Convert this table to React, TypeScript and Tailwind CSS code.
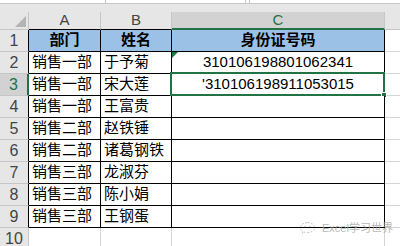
import React from "react";

const rows: [string, string, string][] = [
  ["部门", "姓名", "身份证号码"],
  ["销售一部", "于予菊", "310106198801062341"],
  ["销售一部", "宋大莲", "'310106198911053015"],
  ["销售一部", "王富贵", ""],
  ["销售二部", "赵铁锤", ""],
  ["销售二部", "诸葛钢铁", ""],
  ["销售三部", "龙淑芬", ""],
  ["销售三部", "陈小娟", ""],
  ["销售三部", "王钢蛋", ""],
  ["", "", ""],
];

const font = { fontFamily: '"Liberation Sans", "Noto Sans CJK SC", sans-serif' };

export default function App() {
  return (
    <div className="relative w-[400px] h-[246px] overflow-hidden bg-white text-black" style={font}>
      {/* formula bar strip */}
      <div className="flex h-[4px] border-b border-[#c6c6c6] bg-white">
        <div className="w-[106px] border-r border-[#c6c6c6]" />
        <div className="w-[140px] border-r border-[#c6c6c6]" />
        <div className="w-[4px] border-r border-[#c6c6c6]" />
        <div className="flex-1" />
      </div>
      <div className="h-[8px] bg-[#e6e6e6]" />
      <div className="grid grid-cols-[29px_72px_71px_213px_1fr] grid-rows-[18px_repeat(10,22px)]">
        {/* column headers */}
        <div className="relative bg-[#e6e6e6] border-r border-b border-[#c6c6c6]">
          <div className="absolute right-[2px] bottom-[2px] w-0 h-0 border-l-[11px] border-l-transparent border-b-[11px] border-b-[#b4b4b4]" />
        </div>
        <div className="flex items-center justify-center bg-[#e6e6e6] border-r border-[#c6c6c6] border-b border-b-black text-[15px] text-[#444]">A</div>
        <div className="flex items-center justify-center bg-[#e6e6e6] border-r border-[#c6c6c6] border-b border-b-black text-[15px] text-[#444]">B</div>
        <div className="flex items-center justify-center bg-[#d2d2d2] border-r border-[#c6c6c6] border-b-2 border-b-[#217346] text-[15px] text-[#217346]">C</div>
        <div className="bg-[#e6e6e6] border-b border-[#c6c6c6]" />

        {rows.map((r, i) => {
          const n = i + 1;
          const inTable = n <= 9;
          const isHeader = n === 1;
          const sel = n === 3;
          const bc = inTable ? "border-black" : "border-[#d4d4d4]";
          const fill = isHeader ? "bg-[#9bc2e6] font-bold" : "bg-white";
          return (
            <React.Fragment key={n}>
              <div
                className={`flex items-center justify-center text-[16px] border-b border-[#c6c6c6] ${
                  sel ? "bg-[#d2d2d2] text-[#217346] border-r-2 border-r-[#217346]" : "bg-[#e6e6e6] text-[#444] border-r"
                } ${inTable && !sel ? "border-r-black" : ""}`}
              >
                {n}
              </div>
              <div
                className={`flex items-center text-[15px] border-r border-b ${bc} ${fill} ${
                  isHeader ? "justify-center" : "pl-[3px]"
                }`}
              >
                {r[0]}
              </div>
              <div
                className={`flex items-center text-[15px] border-r border-b ${bc} ${fill} ${
                  isHeader ? "justify-center" : "pl-[3px]"
                }`}
              >
                {r[1]}
              </div>
              <div className={`relative flex items-center justify-center text-[15px] border-r border-b ${bc} ${fill}`}>
                {n === 2 && (
                  <div className="absolute left-0 top-0 w-0 h-0 border-t-[6px] border-t-[#1e7a44] border-r-[6px] border-r-transparent" />
                )}
                {r[2]}
                {sel && (
                  <>
                    <div className="absolute -left-[2px] -top-[2px] -right-[1px] -bottom-[1px] border-2 border-[#217346]" />
                    <div className="absolute -right-[3px] -bottom-[3px] w-[6px] h-[6px] bg-[#217346] border border-white" />
                  </>
                )}
              </div>
              <div className="bg-white border-b border-[#d4d4d4]" />
            </React.Fragment>
          );
        })}
      </div>
      {/* watermark */}
      <div className="absolute left-[299px] top-[221px] flex items-center gap-[6px] whitespace-nowrap opacity-80">
        <svg width="17" height="14" viewBox="0 0 17 14" fill="none" stroke="#b8b8b8" strokeWidth="1">
          <path d="M8.5 1.5 C4.5 1.5 1.5 3.8 1.5 6.6 C1.5 8.2 2.4 9.5 3.8 10.4 L3.3 12.3 L5.6 11.2 C6.5 11.5 7.5 11.7 8.5 11.7 C12.5 11.7 15.5 9.4 15.5 6.6 C15.5 3.8 12.5 1.5 8.5 1.5 Z" strokeDasharray="2 1.5" />
          <circle cx="6" cy="5.5" r="0.8" fill="#b8b8b8" stroke="none" />
          <circle cx="11" cy="5.5" r="0.8" fill="#b8b8b8" stroke="none" />
        </svg>
        <span className="text-[11px] leading-none text-[#a8a8a8]">Excel学习世界</span>
      </div>
    </div>
  );
}
